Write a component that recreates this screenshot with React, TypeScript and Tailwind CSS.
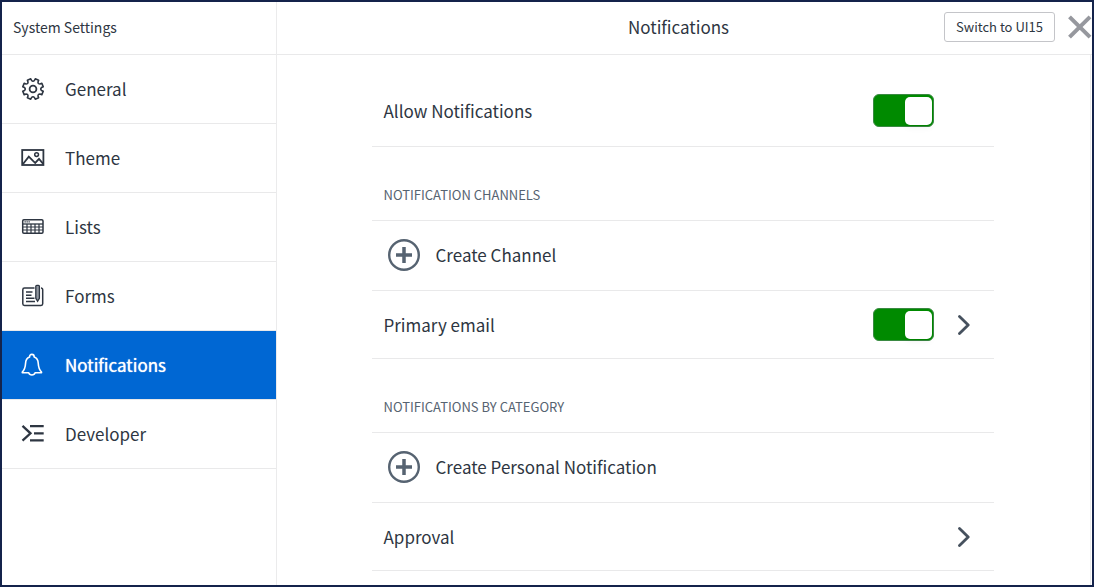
import { useState } from "react";
import type { ReactNode } from "react";

const iconClass = "h-6 w-6 shrink-0";

function GearIcon() {
  const teeth = 8;
  let d = "";
  for (let i = 0; i < teeth; i++) {
    const base = (i * 360) / teeth - 90 + 22.5;
    const at = (offset: number, radius: number) => {
      const a = ((base + offset) * Math.PI) / 180;
      return `${(12 + radius * Math.cos(a)).toFixed(2)} ${(12 + radius * Math.sin(a)).toFixed(2)}`;
    };
    d += `${i === 0 ? "M" : "L"}${at(-10, 10.5)}L${at(10, 10.5)}L${at(13, 8.6)}Q${at(22.5, 7)} ${at(32, 8.6)}`;
  }
  return (
    <svg viewBox="0 0 24 24" className={iconClass} fill="none" stroke="currentColor" strokeWidth="1.6" strokeLinejoin="round" aria-hidden="true">
      <path d={`${d}Z`} />
      <circle cx="12" cy="12" r="3.4" strokeWidth="1.8" />
    </svg>
  );
}

function PictureIcon() {
  return (
    <svg viewBox="0 0 24 24" className={iconClass} fill="none" stroke="currentColor" strokeWidth="1.8" aria-hidden="true">
      <rect x="1.2" y="4" width="21.2" height="15" />
      <path d="M2 18 7.800 10.600l4.500 4.600 1.900 1.700 3.800-4.100 4.200 5" />
      <circle cx="15.600" cy="8.600" r="1.900" strokeWidth="1.500" />
    </svg>
  );
}

function TableIcon() {
  return (
    <svg viewBox="0 0 24 24" className={iconClass} fill="none" stroke="currentColor" aria-hidden="true">
      <rect x="1.700" y="4.700" width="20.300" height="13.500" rx="1.200" strokeWidth="1.500" />
      <path d="M2 9h20" strokeWidth="1.300" />
      <path d="M2 12h20M2 15h20M6 9v9.500M10 9v9.500M14 9v9.500M18 9v9.500" strokeWidth="1.200" />
      <path d="M3.500 6.900h5.500" strokeWidth="1.300" strokeDasharray="1.300 .7" />
    </svg>
  );
}

function FormIcon() {
  return (
    <svg viewBox="0 0 24 24" className={iconClass} fill="none" stroke="currentColor" aria-hidden="true">
      <path d="M13.500 4H3.500A1.700 1.700 0 0 0 1.800 5.700v14A1.700 1.700 0 0 0 3.500 21.400h16.500a1.700 1.700 0 0 0 1.700-1.700v-14a1.700 1.700 0 0 0-1.700-1.700" strokeWidth="1.500" />
      <path d="M5 8h6.500M5 11.200h5.500M5 14.300h8.500M5 17.500h9" strokeWidth="1.400" />
      <path d="M14.800 2.300a1 1 0 0 1 1-1h1.600a1 1 0 0 1 1 1v12l-1.800 2.900-1.800-2.900Z" strokeWidth="1.300" fill="#9298a1" />
    </svg>
  );
}

function BellIcon() {
  return (
    <svg viewBox="0 0 24 24" className={iconClass} fill="none" stroke="currentColor" strokeWidth="1.600" strokeLinejoin="round" aria-hidden="true">
      <path d="M8.600 4C8.600 2.300 9.500 1.400 10.900 1.400s2.300.9 2.300 2.600c2.600 1 3.900 3.100 4 6 .2 3.500.4 6.300 3.300 9v.800h-6.400c-.5 1.500-1.600 2.200-3.200 2.200s-2.700-.7-3.200-2.200H1.300v-.8c2.900-2.700 3.100-5.500 3.300-9 .1-2.900 1.400-5 4-6Z" />
    </svg>
  );
}

function DeveloperIcon() {
  return (
    <svg viewBox="0 0 24 24" className={iconClass} fill="none" stroke="currentColor" strokeWidth="2.300" aria-hidden="true">
      <path d="m1.500 3.900 8 7.400-8 7.400M9 4.200h13.700M13 11.300h9.700M9 18.400h13.700" />
    </svg>
  );
}

function PlusCircleIcon() {
  return (
    <svg viewBox="0 0 32 32" className="h-8 w-8 shrink-0 text-[#566371]" fill="none" stroke="currentColor" aria-hidden="true">
      <circle cx="16" cy="16" r="14.800" strokeWidth="2.400" />
      <path d="M16 8v16M8 16h16" strokeWidth="3.500" />
    </svg>
  );
}

function Chevron() {
  return (
    <svg viewBox="0 0 12 20" className="h-5 w-3 shrink-0" fill="none" stroke="#46515e" strokeWidth="2.800" strokeLinecap="round" strokeLinejoin="round" aria-hidden="true">
      <path d="m1.500 1.500 8.700 8.500-8.700 8.500" />
    </svg>
  );
}

function Toggle({ label }: { label: string }) {
  const [on, setOn] = useState(true);
  return (
    <label className="relative block h-[33px] w-[61px] shrink-0 cursor-pointer">
      <input
        type="checkbox"
        role="switch"
        aria-label={label}
        checked={on}
        onChange={(e) => setOn(e.target.checked)}
        className="peer absolute inset-0 h-full w-full cursor-pointer appearance-none rounded-md border border-[#3a8a42] bg-gray-400 checked:bg-[#008a00]"
      />
      <span className="pointer-events-none absolute top-[3px] left-[3px] h-[28px] w-[27px] rounded-[5px] bg-white shadow-md shadow-black/5 peer-checked:left-[32px]" />
    </label>
  );
}

const items: { name: string; icon: ReactNode }[] = [
  { name: "General", icon: <GearIcon /> },
  { name: "Theme", icon: <PictureIcon /> },
  { name: "Lists", icon: <TableIcon /> },
  { name: "Forms", icon: <FormIcon /> },
  { name: "Notifications", icon: <BellIcon /> },
  { name: "Developer", icon: <DeveloperIcon /> },
];

function SectionTitle({ children }: { children: ReactNode }) {
  return (
    <h3 className="flex h-[74px] items-end border-b border-[#e9e9ea] px-3 pb-[13px] text-[13px] leading-6 text-[#566371]">
      {children}
    </h3>
  );
}

function CreateRow({ children }: { children: ReactNode }) {
  return (
    <button type="button" className="flex h-[70px] w-full items-center gap-4 border-b border-[#e9e9ea] px-4 pb-0.5 text-left">
      <PlusCircleIcon />
      <span>{children}</span>
    </button>
  );
}

export default function App() {
  return (
    <div className="flex h-screen overflow-hidden border-2 border-[#14234b] bg-white font-['Noto_Sans_CJK_SC',sans-serif] text-[17px] leading-6 text-[#2e3642]">
      <aside className="flex w-[275px] shrink-0 flex-col border-r border-[#ebebec]">
        <h1 className="flex h-[53px] items-center border-b border-[#e9e9ea] px-[11px] pb-0.5 text-sm">System Settings</h1>
        <nav>
          {items.map((item) => {
            const active = item.name === "Notifications";
            return (
              <a
                key={item.name}
                href={`#${item.name.toLowerCase()}`}
                aria-current={active ? "page" : undefined}
                className={
                  active
                    ? "flex h-[69px] items-center gap-5 border-b border-[#e9e9ea] bg-[#0067d3] bg-clip-padding px-[19px] text-white [text-shadow:0_0_1px_#ffffff]"
                    : "flex h-[69px] items-center gap-5 border-b border-[#e9e9ea] px-[19px]"
                }
              >
                {item.icon}
                <span>{item.name}</span>
              </a>
            );
          })}
        </nav>
      </aside>

      <div className="flex min-w-0 flex-1 flex-col">
        <header className="grid h-[53px] shrink-0 grid-cols-[1fr_auto_1fr] items-center border-b border-[#e9e9ea] pr-3 pb-[3px]">
          <h2 className="col-start-2">Notifications</h2>
          <div className="-mr-3 flex items-center justify-end gap-3">
            <button type="button" className="h-[30px] rounded-[3px] border border-[#c4c5c9] px-[11px] text-[13px] whitespace-nowrap">
              Switch to UI15
            </button>
            <button type="button" aria-label="Close">
              <svg viewBox="0 0 25 24" className="block h-6 w-[25px]" fill="none" stroke="#96989e" strokeWidth="4" aria-hidden="true">
                <path d="m2.500 1.800 20.500 20.400M23 1.800 2.500 22.200" />
              </svg>
            </button>
          </div>
        </header>

        <main className="mr-px min-h-0 flex-1 overflow-hidden border-r border-[#ebebec] pr-0.5">
          <div className="mx-auto max-w-[622px] pt-5">
            <div className="flex h-[72px] items-center justify-between border-b border-[#e9e9ea] pr-[60px] pl-3">
              <span>Allow Notifications</span>
              <Toggle label="Allow Notifications" />
            </div>

            <section>
              <SectionTitle>NOTIFICATION CHANNELS</SectionTitle>
              <CreateRow>Create Channel</CreateRow>
              <div className="flex h-[68px] items-center border-b border-[#e9e9ea] pr-6 pl-3">
                <span className="flex-1">Primary email</span>
                <Toggle label="Primary email" />
                <button type="button" aria-label="Open Primary email" className="ml-6">
                  <Chevron />
                </button>
              </div>
            </section>

            <section>
              <SectionTitle>NOTIFICATIONS BY CATEGORY</SectionTitle>
              <CreateRow>Create Personal Notification</CreateRow>
              <button type="button" className="flex h-[68px] w-full items-center justify-between border-b border-[#e9e9ea] pr-6 pl-3 text-left">
                <span>Approval</span>
                <Chevron />
              </button>
            </section>
          </div>
        </main>
      </div>
    </div>
  );
}
